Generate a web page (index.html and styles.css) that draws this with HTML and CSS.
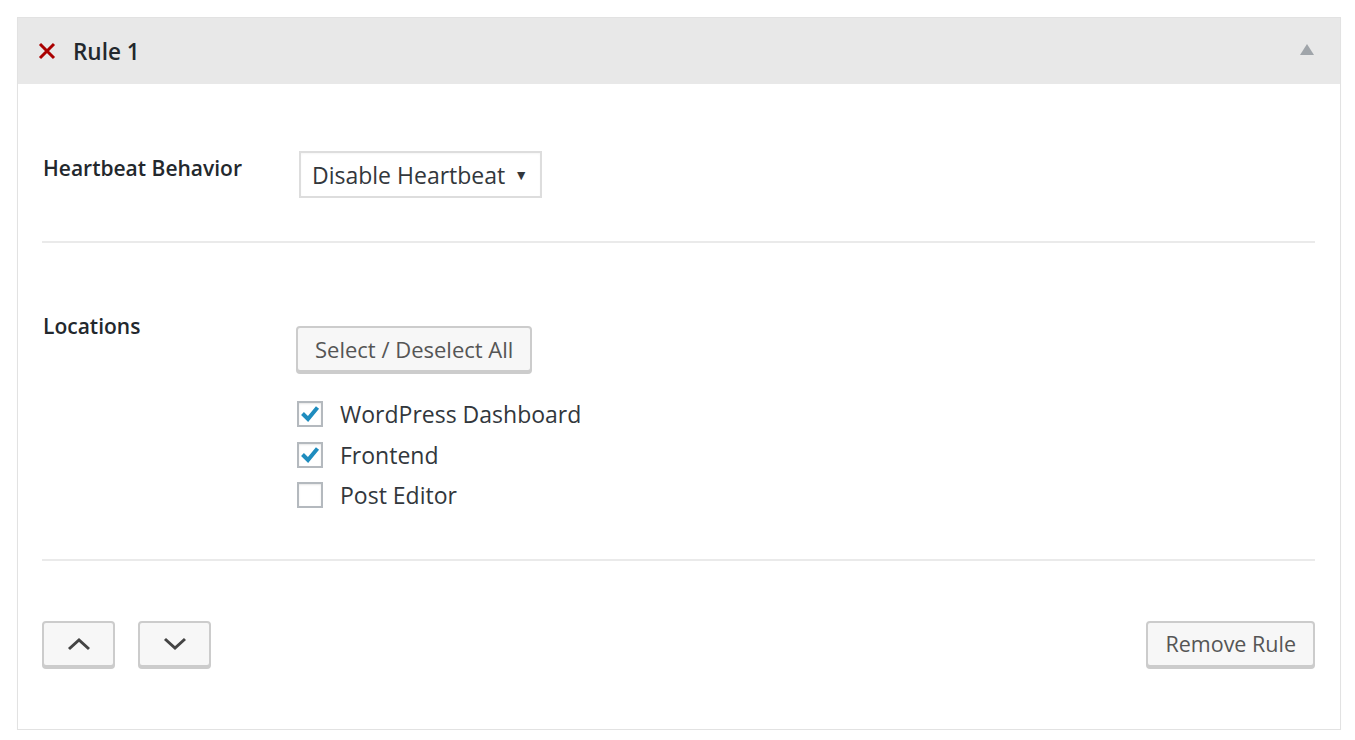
FILE: index.html
```html
<!DOCTYPE html>
<html>
<head>
<meta charset="utf-8">
<link rel="stylesheet" href="styles.css">
</head>
<body>
<div class="panel">
  <div class="panel-head">
    <span class="remove-x">
      <svg width="18" height="18" viewBox="0 0 18 18"><path d="M2 2 L16 16 M16 2 L2 16" stroke="#a00" stroke-width="3" fill="none"/></svg>
    </span>
    <span class="title">Rule 1</span>
    <span class="toggle">
      <svg width="14" height="11" viewBox="0 0 14 11"><path d="M7 0 L14 11 L0 11 Z" fill="#a0a5aa"/></svg>
    </span>
  </div>
  <div class="panel-body">
    <div class="row row-behavior">
      <div class="label">Heartbeat Behavior</div>
      <div class="field">
        <div class="select">Disable Heartbeat <span class="caret">▼</span></div>
      </div>
    </div>
    <div class="row row-locations">
      <div class="label label-loc">Locations</div>
      <div class="field">
        <button class="btn btn-select">Select / Deselect All</button>
        <ul class="checks">
          <li><span class="cb checked"><svg width="22" height="22" viewBox="0 0 22 22"><path d="M3.5 10.5 L9 16 L18.5 4.5" stroke="#1e8cbe" stroke-width="4" fill="none"/></svg></span>WordPress Dashboard</li>
          <li><span class="cb checked"><svg width="22" height="22" viewBox="0 0 22 22"><path d="M3.5 10.5 L9 16 L18.5 4.5" stroke="#1e8cbe" stroke-width="4" fill="none"/></svg></span>Frontend</li>
          <li><span class="cb"></span>Post Editor</li>
        </ul>
      </div>
    </div>
    <div class="row row-actions">
      <div class="move">
        <button class="btn btn-icon"><svg width="26" height="16" viewBox="0 0 26 16"><path d="M3 13 L13 4 L23 13" stroke="#444" stroke-width="3" fill="none"/></svg></button>
        <button class="btn btn-icon"><svg width="26" height="16" viewBox="0 0 26 16"><path d="M3 3 L13 12 L23 3" stroke="#444" stroke-width="3" fill="none"/></svg></button>
      </div>
      <button class="btn btn-remove">Remove Rule</button>
    </div>
  </div>
</div>
</body>
</html>
```
FILE: styles.css
```css
html, body {
  margin: 0;
  padding: 0;
  background: #fff;
}
body {
  padding: 17px 14px 0 17px;
  font-family: "Open Sans", "Noto Sans", sans-serif;
  color: #23282d;
}
.panel {
  border: 1px solid #e2e2e2;
  box-shadow: 0 1px 1px rgba(0,0,0,0.04);
  background: #fff;
}
.panel-head {
  height: 66px;
  background: #e8e8e8;
  display: flex;
  align-items: center;
  padding: 0 26px 0 20px;
}
.remove-x {
  display: flex;
  width: 18px;
  height: 18px;
  margin-right: 17px;
}
.title {
  font-size: 22.5px;
  font-weight: 600;
  color: #23282d;
  flex: 1;
}
.toggle {
  display: flex;
  margin-top: -4px;
}
.panel-body {
  padding: 0 25px 0 24px;
}
.row {
  display: flex;
  border-bottom: 2px solid #eaeaea;
}
.row:last-child {
  border-bottom: none;
}
.row-behavior {
  padding: 67px 0 43px 1px;
}
.label {
  width: 256px;
  font-size: 21px;
  font-weight: 600;
  color: #23282d;
  padding-top: 3px;
}
.select {
  display: inline-flex;
  align-items: center;
  height: 43px;
  border: 2px solid #ddd;
  padding: 0 12px 0 11px;
  font-size: 23px;
  color: #32373c;
  box-shadow: inset 0 1px 2px rgba(0,0,0,0.04);
}
.caret {
  font-size: 14px;
  margin-left: 9px;
  color: #32373c;
}
.row-locations {
  padding: 66px 0 43px 1px;
}
.label-loc {
  width: 253px;
  padding-top: 3px;
}
.field {
  display: flex;
  flex-direction: column;
  align-items: flex-start;
}
.row-locations .field {
  padding-top: 17px;
}
.btn {
  font-family: "Open Sans", "Noto Sans", sans-serif;
  background: #f7f7f7;
  border: 2px solid #ccc;
  border-radius: 4px;
  box-shadow: 0 2px 0 #ccc;
  color: #555;
  cursor: pointer;
  margin: 0;
}
.btn-select {
  height: 46px;
  padding: 0 17px;
  font-size: 22px;
}
.checks {
  list-style: none;
  margin: 22px 0 0 0;
  padding: 0;
}
.checks li {
  display: flex;
  align-items: center;
  height: 40.5px;
  font-size: 23px;
  color: #32373c;
}
.cb {
  width: 26px;
  height: 26px;
  box-sizing: border-box;
  border: 2px solid #b4b9be;
  background: #fff;
  margin-right: 17px;
  margin-left: 1px;
  display: flex;
  align-items: center;
  justify-content: center;
  box-shadow: inset 0 1px 2px rgba(0,0,0,0.1);
}
.row-actions {
  padding: 60px 0 62px 0;
  justify-content: space-between;
  align-items: flex-start;
}
.move {
  display: flex;
  gap: 23px;
}
.btn-icon {
  width: 73px;
  height: 46px;
  display: flex;
  align-items: center;
  justify-content: center;
  padding: 0;
}
.btn-remove {
  height: 46px;
  padding: 0 17px;
  font-size: 21.5px;
}
```
